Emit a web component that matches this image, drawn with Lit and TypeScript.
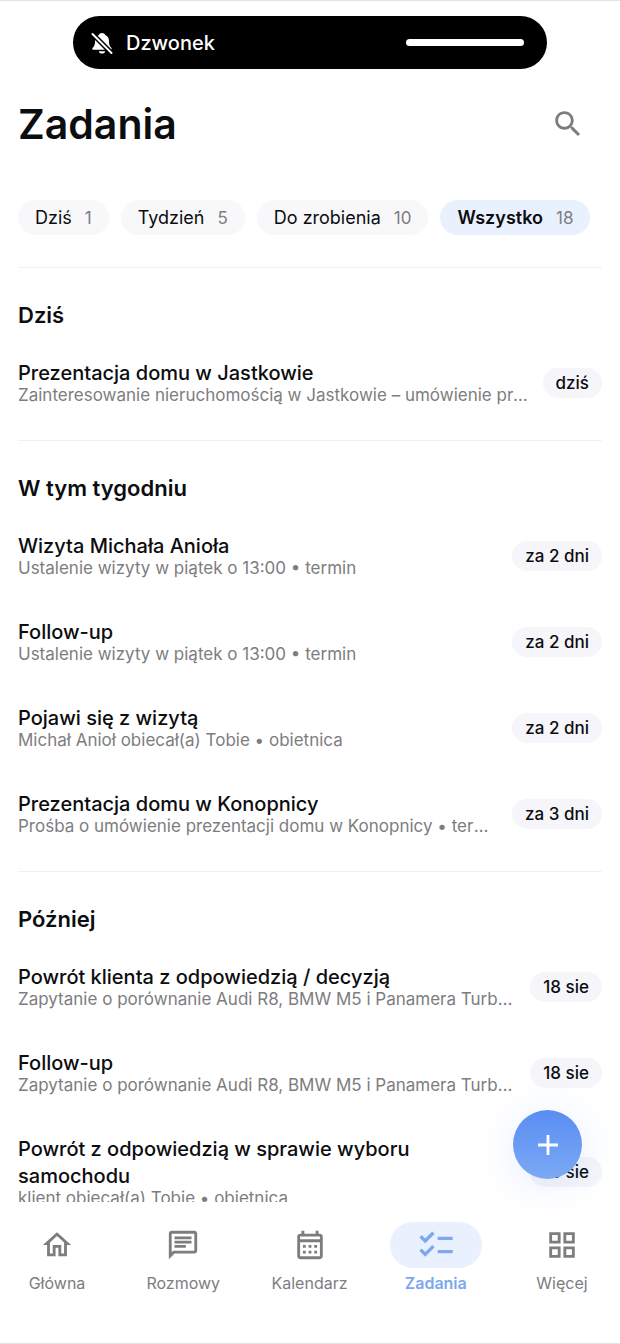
import { LitElement, html, css, svg, nothing } from 'lit';
import { customElement, property, state } from 'lit/decorators.js';
import { classMap } from 'lit/directives/class-map.js';

interface Task {
  title: string;
  note: string;
  due: string;
}

interface Section {
  name: string;
  tasks: Task[];
}

const SECTIONS: Section[] = [
  {
    name: 'Dziś',
    tasks: [
      {
        title: 'Prezentacja domu w Jastkowie',
        note: 'Zainteresowanie nieruchomością w Jastkowie – umówienie prezentacji',
        due: 'dziś',
      },
    ],
  },
  {
    name: 'W tym tygodniu',
    tasks: [
      { title: 'Wizyta Michała Anioła', note: 'Ustalenie wizyty w piątek o 13:00 • termin', due: 'za 2 dni' },
      { title: 'Follow-up', note: 'Ustalenie wizyty w piątek o 13:00 • termin', due: 'za 2 dni' },
      { title: 'Pojawi się z wizytą', note: 'Michał Anioł obiecał(a) Tobie • obietnica', due: 'za 2 dni' },
      {
        title: 'Prezentacja domu w Konopnicy',
        note: 'Prośba o umówienie prezentacji domu w Konopnicy • termin',
        due: 'za 3 dni',
      },
    ],
  },
  {
    name: 'Później',
    tasks: [
      {
        title: 'Powrót klienta z odpowiedzią / decyzją',
        note: 'Zapytanie o porównanie Audi R8, BMW M5 i Panamera Turbo • termin',
        due: '18 sie',
      },
      {
        title: 'Follow-up',
        note: 'Zapytanie o porównanie Audi R8, BMW M5 i Panamera Turbo • termin',
        due: '18 sie',
      },
      {
        title: 'Powrót z odpowiedzią w sprawie wyboru samochodu',
        note: 'klient obiecał(a) Tobie • obietnica',
        due: '18 sie',
      },
    ],
  },
];

const FILTERS = [
  { label: 'Dziś', count: 1 },
  { label: 'Tydzień', count: 5 },
  { label: 'Do zrobienia', count: 10 },
  { label: 'Wszystko', count: 18 },
];

const ICONS = {
  home: svg`<path d="M12 5.69l5 4.5V18h-2v-6H9v6H7v-7.81l5-4.5M12 3L2 12h3v8h6v-6h2v6h6v-8h3L12 3z"/>`,
  chat: svg`<path d="M4 4h16v12H5.17L4 17.17V4m0-2c-1.1 0-1.99.9-1.99 2L2 22l4-4h14c1.1 0 2-.9 2-2V4c0-1.1-.9-2-2-2H4zm2 10h8v2H6v-2zm0-3h12v2H6V9zm0-3h12v2H6V6z"/>`,
  calendar: svg`<path d="M19 4h-1V2h-2v2H8V2H6v2H5c-1.11 0-1.99.9-1.99 2L3 20c0 1.1.89 2 2 2h14c1.1 0 2-.9 2-2V6c0-1.1-.9-2-2-2zm0 16H5V10h14v10zm0-12H5V6h14v2zM9 14H7v-2h2v2zm4 0h-2v-2h2v2zm4 0h-2v-2h2v2zm-8 4H7v-2h2v2zm4 0h-2v-2h2v2zm4 0h-2v-2h2v2z"/>`,
  checklist: svg`<path d="M22 7h-9v2h9V7zm0 8h-9v2h9v-2zM5.54 11L2 7.46l1.41-1.41 2.12 2.12 4.24-4.24 1.41 1.41L5.54 11zm0 8L2 15.46l1.41-1.41 2.12 2.12 4.24-4.24 1.41 1.41L5.54 19z"/>`,
  grid: svg`<path d="M3 3v8h8V3H3zm6 6H5V5h4v4zm-6 4v8h8v-8H3zm6 6H5v-4h4v4zm4-16v8h8V3h-8zm6 6h-4V5h4v4zm-6 4v8h8v-8h-8zm6 6h-4v-4h4v4z"/>`,
  search: svg`<path d="M15.5 14h-.79l-.28-.27C15.41 12.59 16 11.11 16 9.5 16 5.91 13.09 3 9.5 3S3 5.91 3 9.5 5.91 16 9.5 16c1.61 0 3.09-.59 4.23-1.57l.27.28v.79l5 4.99L20.49 19l-4.99-5zm-6 0C7.01 14 5 11.99 5 9.5S7.01 5 9.5 5 14 7.01 14 9.5 11.99 14 9.5 14z"/>`,
  plus: svg`<path d="M19 13h-6v6h-2v-6H5v-2h6V5h2v6h6v2z"/>`,
  bellOff: svg`
    <path d="M12 2c-1.6 0-2.8.9-3.2 2C6.300 5 5 7.200 5 10.200c0 3.800-.8 5-2.300 6.500-.8 1-.4 2.100.9 2.100h16.800c1.300 0 1.700-1.100.9-2.100C19.800 15.200 19 14 19 10.200c0-3-1.300-5.200-3.800-6.200-.4-1.100-1.600-2-3.200-2z"/>
    <path d="M8.700 20.200h6.600c-.4 1.400-1.600 2.300-3.300 2.300s-2.900-.9-3.300-2.300z"/>
    <path class="cut" d="M1.500 2l20.500 20.500"/>
    <path class="slash" d="M2.500 3l19 19"/>`,
};

type IconName = keyof typeof ICONS;

const TABS: { label: string; icon: IconName }[] = [
  { label: 'Główna', icon: 'home' },
  { label: 'Rozmowy', icon: 'chat' },
  { label: 'Kalendarz', icon: 'calendar' },
  { label: 'Zadania', icon: 'checklist' },
  { label: 'Więcej', icon: 'grid' },
];

@customElement('task-icon')
export class TaskIcon extends LitElement {
  @property() name: IconName = 'home';

  static styles = css`
    :host { display: block; flex: none; height: 34px; width: 34px; }
    svg { display: block; fill: currentColor; height: 100%; width: 100%; }
    .cut { stroke: #000; stroke-width: 5; }
    .slash { stroke: currentColor; stroke-linecap: round; stroke-width: 2; }
  `;

  render() {
    return html`<svg viewBox="0 0 24 24" aria-hidden="true">${ICONS[this.name]}</svg>`;
  }
}

@customElement('task-row')
export class TaskRow extends LitElement {
  @property({ attribute: false }) task!: Task;

  static styles = css`
    :host { align-items: center; display: flex; gap: 12px; }
    .text { flex: 1; min-width: 0; }
    .title {
      color: #0c0d0f;
      font-size: 20px;
      font-weight: 500;
      line-height: 27px;
      margin: 0;
    }
    .note {
      color: #7d7d80;
      font-size: 17px;
      line-height: 20px;
      margin: -2px 0 0;
      overflow: hidden;
      text-overflow: ellipsis;
      white-space: nowrap;
    }
    .due {
      background: #f5f5fa;
      border-radius: 15px;
      color: #0c0d0f;
      font-size: 17px;
      font-weight: 500;
      line-height: 30px;
      padding: 0 13px;
      white-space: nowrap;
    }
  `;

  render() {
    return html`
      <div class="text">
        <h3 class="title">${this.task.title}</h3>
        <p class="note">${this.task.note}</p>
      </div>
      <span class="due">${this.task.due}</span>
    `;
  }
}

@customElement('app-root')
export class AppRoot extends LitElement {
  @state() private _filter = 'Wszystko';
  @state() private _tab = 'Zadania';

  static styles = css`
    :host {
      background: #fff;
      border-bottom: 1px solid #e4e4e6;
      border-top: 1px solid #e4e4e6;
      box-sizing: border-box;
      color: #0c0d0f;
      display: flex;
      flex-direction: column;
      font-family: Inter, 'Liberation Sans', sans-serif;
      height: 100vh;
    }
    button { background: none; border: 0; color: inherit; cursor: pointer; font: inherit; padding: 0; }
    .island {
      align-items: center;
      background: #000;
      border-radius: 27px;
      color: #fff;
      display: flex;
      flex: none;
      font-size: 20px;
      font-weight: 500;
      gap: 12px;
      height: 53px;
      margin: 15px 73px 0;
      padding: 0 23px 0 17px;
    }
    .island task-icon { height: 24px; width: 24px; }
    .level { background: #fff; border-radius: 4px; height: 7px; margin-left: auto; width: 118px; }
    header {
      align-items: center;
      display: flex;
      flex: none;
      justify-content: space-between;
      padding: 27px 35px 0 18px;
    }
    h1 { font-size: 41px; font-weight: 600; line-height: 56px; margin: 0; }
    .search { color: #7d7d80; }
    .filters { display: flex; flex: none; gap: 12px; padding: 48px 18px 32px; }
    .filter {
      align-items: center;
      background: #f8f8fb;
      border-radius: 18px;
      display: flex;
      font-size: 18px;
      gap: 13px;
      height: 35px;
      padding: 0 17px;
      white-space: nowrap;
    }
    .filter.active { background: #eaf1fe; }
    .filter.active .label { font-weight: 600; }
    .count { color: #7d7d80; font-size: 17px; }
    main {
      border-top: 1px solid #f0f0f2;
      flex: 1;
      margin: 0 18px;
      min-height: 0;
      overflow: auto;
      scrollbar-width: none;
    }
    section { padding: 33px 0 35px; }
    section + section { border-top: 1px solid #f0f0f2; }
    h2 { font-size: 22px; font-weight: 600; line-height: 28px; margin: 0 0 31px; }
    .tasks { display: flex; flex-direction: column; gap: 41px; }
    nav { display: flex; flex: none; justify-content: space-between; padding: 20px 12px 50px 11px; }
    .tab {
      align-items: center;
      color: #7d7d80;
      display: flex;
      flex-direction: column;
      font-size: 16px;
      gap: 5px;
      line-height: 20px;
    }
    .pill { border-radius: 23px; display: grid; height: 46px; place-items: center; width: 92px; }
    .tab.active { color: #7ba8f0; font-weight: 600; }
    .tab.active .pill { background: #eaf1fe; }
    .tab.active task-icon { height: 40px; width: 40px; }
    .add {
      background: linear-gradient(#5a8df3, #7ba9f4);
      border-radius: 50%;
      bottom: 165px;
      box-shadow: 0 6px 40px rgba(90, 141, 243, 0.16);
      color: #fff;
      display: grid;
      height: 69px;
      place-items: center;
      position: absolute;
      right: 38px;
      width: 69px;
    }
  `;

  render() {
    return html`
      <div class="island" role="status">
        <task-icon name="bellOff"></task-icon>
        <span>Dzwonek</span>
        <span class="level"></span>
      </div>
      <header>
        <h1>Zadania</h1>
        <button class="search" aria-label="Szukaj"><task-icon name="search"></task-icon></button>
      </header>
      <div class="filters">
        ${FILTERS.map(f => html`
          <button
            class=${classMap({ filter: true, active: f.label === this._filter })}
            @click=${() => (this._filter = f.label)}
          >
            <span class="label">${f.label}</span>
            <span class="count">${f.count}</span>
          </button>
        `)}
      </div>
      <main>
        ${SECTIONS.map(s => html`
          <section>
            <h2>${s.name}</h2>
            <div class="tasks">
              ${s.tasks.map(t => html`<task-row .task=${t}></task-row>`)}
            </div>
          </section>
        `)}
      </main>
      <nav>
        ${TABS.map(t => html`
          <button
            class=${classMap({ tab: true, active: t.label === this._tab })}
            aria-current=${t.label === this._tab ? 'page' : nothing}
            @click=${() => (this._tab = t.label)}
          >
            <span class="pill"><task-icon name=${t.icon}></task-icon></span>
            <span>${t.label}</span>
          </button>
        `)}
      </nav>
      <button class="add" aria-label="Dodaj zadanie"><task-icon name="plus"></task-icon></button>
    `;
  }
}
